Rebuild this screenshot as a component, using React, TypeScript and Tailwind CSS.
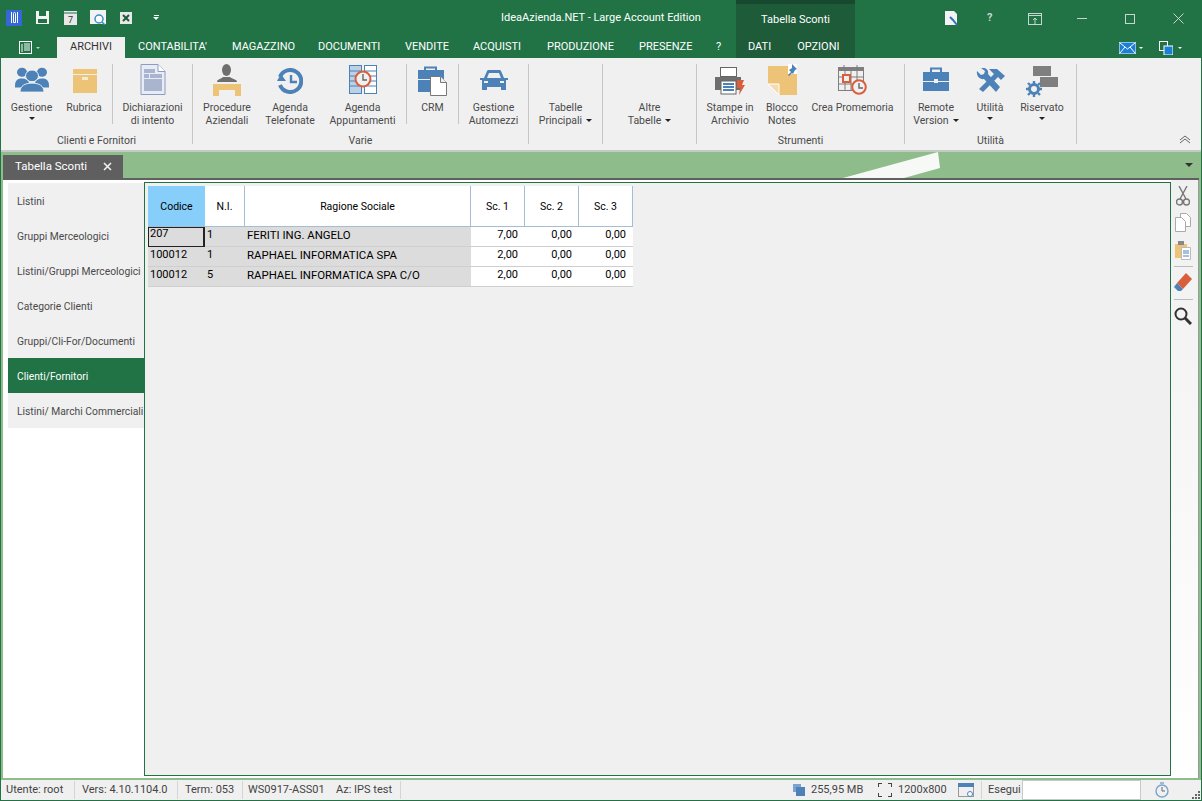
import type { ReactNode } from "react";

const blue = "#4d82b8";
const sand = "#edc377";
const grey = "#7f7f7f";
const red = "#d95f3b";

const GestioneIcon = () => (
  <svg width="34" height="27" viewBox="0 0 34 30" preserveAspectRatio="none">
    <circle cx="7" cy="7" r="5" fill={blue} />
    <circle cx="27" cy="7" r="5" fill={blue} />
    <path d="M0 22c0-6 3-8 7-8s6 2 7 4l-2 6H0z" fill={blue} />
    <path d="M34 22c0-6-3-8-7-8s-6 2-7 4l2 6h12z" fill={blue} />
    <circle cx="17" cy="11" r="6.5" fill={blue} stroke="#f0f0f0" />
    <path d="M5 29c0-7 5-10 12-10s12 3 12 10z" fill={blue} stroke="#f0f0f0" />
  </svg>
);

const RubricaIcon = () => (
  <svg width="24" height="24" viewBox="0 0 24 24">
    <rect width="24" height="5" fill={sand} />
    <rect y="6" width="24" height="18" fill={sand} />
    <rect x="9" y="8" width="6" height="3" fill="#f7e9cd" />
  </svg>
);

const DichiarazioniIcon = () => (
  <svg width="26" height="31" viewBox="0 0 26 31">
    <path d="M1 .5h17l7 7v23H1z" fill="#e8ecf5" stroke="#8f9cc2" />
    <path d="M18 .5v7h7" fill="#fff" stroke="#8f9cc2" />
    <rect x="4" y="5" width="11" height="4" fill="#a9b4cf" />
    <rect x="4" y="10" width="5" height="4" fill="#a9b4cf" />
    <rect x="10" y="10" width="12" height="4" fill="#a9b4cf" />
    <rect x="4" y="15" width="18" height="12" fill="#a9b4cf" />
  </svg>
);

const ProcedureIcon = () => (
  <svg width="28" height="32" viewBox="0 0 28 32">
    <ellipse cx="13.5" cy="6" rx="4.5" ry="6" fill="#6e6e6e" />
    <path d="M4 18c0-3 4-3 6-5h7c2 2 7 2 7 5z" fill="#6e6e6e" />
    <path d="M0 20h28v12h-6v-6H6v6H0z" fill={sand} />
  </svg>
);

const AgendaTelIcon = () => (
  <svg width="26" height="26" viewBox="0 0 26 26">
    <path d="M3 9a11 11 0 1 1 0 8" fill="none" stroke={blue} strokeWidth="4" />
    <path d="M0 13l4-7 5 7z" fill={blue} />
    <path d="M14 7v7h6" fill="none" stroke={blue} strokeWidth="2.4" />
  </svg>
);

const AgendaAppIcon = () => (
  <svg width="28" height="29" viewBox="0 0 28 29">
    <rect x=".5" y=".5" width="12" height="28" fill="#bcd0e6" stroke={blue} />
    <rect x="15.5" y=".5" width="12" height="28" fill="#fff" stroke={blue} />
    <path d="M1 6h11M1 11h11M1 16h11M1 21h11M16 6h11M16 11h11M16 16h11M16 21h11" stroke={blue} />
    <circle cx="14" cy="14" r="7.5" fill="#f0f0f0" stroke={red} strokeWidth="2" />
    <path d="M14 9v6h4" fill="none" stroke="#666" strokeWidth="1.4" />
  </svg>
);

const CrmIcon = () => (
  <svg width="29" height="30" viewBox="0 0 29 30">
    <path d="M7 5V1.5h11V5" fill="none" stroke={blue} strokeWidth="2" />
    <rect y="4" width="26" height="9" fill={blue} />
    <rect y="14" width="26" height="12" fill={blue} />
    <path d="M12.5 10.5h10l6 6v13h-16z" fill="#fff" stroke="#777" />
    <path d="M22.5 10.5v6h6" fill="#eee" stroke="#777" />
  </svg>
);

const CarIcon = () => (
  <svg width="28" height="20" viewBox="0 0 28 20">
    <path d="M4 8l3-7a2 2 0 0 1 1-1h12a2 2 0 0 1 1 1l3 7h4v2h-2v10h-5v-3H7v3H2V10H0V8zM7 8h14l-2-5H9z" fill={blue} fillRule="evenodd" />
    <rect x="4" y="11" width="4" height="2" fill="#f0f0f0" />
    <rect x="20" y="11" width="4" height="2" fill="#f0f0f0" />
  </svg>
);

const PrinterIcon = () => (
  <svg width="30" height="28" viewBox="0 0 30 28">
    <rect x="5.5" y=".5" width="16" height="9" fill="#fff" stroke="#666" />
    <path d="M0 10h26v13H0z" fill="#6e6e6e" />
    <rect x="6" y="14" width="15" height="13" fill="#fff" stroke="#666" />
    <path d="M8 17h11M8 20h11M8 23h11" stroke={blue} strokeWidth="2" />
    <path d="M22 13h7l-2 5h3l-6 10 1-7h-3z" fill={red} />
  </svg>
);

const NotesIcon = () => (
  <svg width="29" height="31" viewBox="0 0 29 31">
    <path d="M0 2h29v29H11L0 20z" fill={sand} />
    <path d="M0 20h11v11z" fill="#f4dcae" stroke="#fff" />
    <rect x="20" width="9" height="10" fill="#fff" />
    <path d="M24 0l5 5-2 1-2 4-1-1-3 3-1-1 3-3-2-2 3-2z" fill={blue} />
  </svg>
);

const PromemoriaIcon = () => (
  <svg width="30" height="30" viewBox="0 0 30 30">
    <rect x=".5" y="2.5" width="25" height="23" fill="none" stroke={grey} />
    <rect y="2" width="26" height="4" fill={grey} />
    <path d="M6 0v5M19 0v5M7 6v20M13 6v20M19 6v20M1 12h25M1 19h25" stroke={grey} />
    <rect x="5" y="10" width="7" height="7" fill="#f0f0f0" stroke={red} strokeWidth="2" />
    <circle cx="21" cy="22" r="6.8" fill="#f0f0f0" stroke={red} strokeWidth="2" />
    <path d="M21 18v5h4" fill="none" stroke="#666" strokeWidth="1.4" />
  </svg>
);

const BriefcaseIcon = () => (
  <svg width="26" height="24" viewBox="0 0 26 24">
    <path d="M8 5V1.5h10V5" fill="none" stroke={blue} strokeWidth="2" />
    <rect y="5" width="26" height="9" fill={blue} />
    <rect y="15" width="26" height="9" fill={blue} />
    <rect x="11" y="12" width="4" height="4" fill="#f0f0f0" />
  </svg>
);

const ToolsIcon = () => (
  <svg width="29" height="25" viewBox="0 0 29 25">
    <path d="M1 3l4 4 3-1 1-3-4-3c5-1 8 2 7 6l12 13-4 5L8 11C4 12 0 8 1 3z" fill={blue} />
    <path d="M13 1h8l8 7-4 4-3-3L7 24l-4-3L18 6z" fill={blue} />
  </svg>
);

const RiservatoIcon = () => (
  <svg width="32" height="31" viewBox="0 0 32 31">
    <rect x="7" width="18" height="10" fill={grey} />
    <rect x="14" y="11" width="18" height="10" fill={grey} />
    <circle cx="8" cy="23" r="4.5" fill="none" stroke={blue} strokeWidth="3" />
    <path d="M8 15v3M8 28v3M0 23h3M13 23h3M2 17l2 2M12 27l2 2M2 29l2-2M12 19l2-2" stroke={blue} strokeWidth="2.4" />
  </svg>
);

const Arrow = () => <span className="inline-block w-0 h-0 border-x-[3px] border-x-transparent border-t-[3px] border-t-[#222]" />;

type ItemProps = { w: string; top?: string; icon: ReactNode; lines: string[]; arrow?: "below" | "inline" };

const Item = ({ w, top, icon, lines, arrow }: ItemProps) => (
  <div className={`${w} flex flex-col items-center shrink-0`}>
    <div className={`h-[37px] flex items-start justify-center ${top ?? ""}`}>{icon}</div>
    {lines.map((l, i) => (
      <div key={i} className="h-[13px] leading-[13px] whitespace-nowrap flex items-center gap-1">
        {l}
        {arrow === "inline" && i === lines.length - 1 && <Arrow />}
      </div>
    ))}
    {arrow === "below" && (
      <div className="h-[9px] flex items-center">
        <Arrow />
      </div>
    )}
  </div>
);

const ShortSep = () => <div className="w-px h-[60px] bg-[#c6c6c6] shrink-0" />;

const Group = ({ w, label, children }: { w: string; label?: string; children: ReactNode }) => (
  <div className={`${w} shrink-0 h-[80px] mt-[6px] border-r border-[#c6c6c6] flex flex-col`}>
    <div className="h-[70px] shrink-0 flex">{children}</div>
    <div className="text-center leading-[14px] shrink-0">{label}</div>
  </div>
);

const tabs = [
  ["ARCHIVI", "w-[68px] bg-[#f0f0f0] text-[#333]"],
  ["CONTABILITA'", "w-[94px]"],
  ["MAGAZZINO", "w-[86px]"],
  ["DOCUMENTI", "w-[87px]"],
  ["VENDITE", "w-[68px]"],
  ["ACQUISTI", "w-[74px]"],
  ["PRODUZIONE", "w-[92px]"],
  ["PRESENZE", "w-[77px]"],
  ["?", "w-[20px]"],
];

const sideItems = [
  "Listini",
  "Gruppi Merceologici",
  "Listini/Gruppi Merceologici",
  "Categorie Clienti",
  "Gruppi/Cli-For/Documenti",
  "Clienti/Fornitori",
  "Listini/ Marchi Commerciali",
];

const rows = [
  ["207", "1", "FERITI ING. ANGELO", "7,00"],
  ["100012", "1", "RAPHAEL INFORMATICA SPA", "2,00"],
  ["100012", "5", "RAPHAEL INFORMATICA SPA C/O", "2,00"],
];

const Head = ({ w, children, cls }: { w: string; children: ReactNode; cls?: string }) => (
  <div className={`${w} h-full pt-[2px] flex items-center justify-center border-r border-b border-[#a3bdd6] ${cls ?? "bg-white"}`}>{children}</div>
);

const Sep = () => <div className="w-px h-[18px] bg-[#d5d5d5] shrink-0" />;

export default function App() {
  return (
    <div className="w-[1202px] h-[801px] overflow-hidden flex flex-col bg-[#217346] text-[11px] text-[#444] font-['Roboto',sans-serif]">
      {/* title bar + ribbon tabs */}
      <div className="h-[58px] flex text-white shrink-0">
        <div className="w-[736px] flex flex-col">
          <div className="h-[37px] flex items-center">
            <div className="flex items-center pb-[2px]">
              <div className="w-[16px] h-[16px] ml-[6px] bg-[#3467d8] flex items-center justify-center gap-[1px]">
                <span className="w-px h-[11px] bg-white" />
                <span className="w-[3px] h-[11px] border border-white rounded-t-sm" />
                <span className="w-px h-[11px] bg-white" />
              </div>
              <svg className="ml-[14px]" width="13" height="13" viewBox="0 0 13 13">
                <path d="M0 0h13v13H0z" fill="#f3f3f3" />
                <rect x="3" y="0" width="7" height="5" fill="#217346" />
                <rect x="2" y="8" width="9" height="4" fill="#217346" />
              </svg>
              <svg className="ml-[15px]" width="13" height="14" viewBox="0 0 13 14">
                <path d="M0 0h13v14H0z" fill="#e8e8e8" />
                <path d="M0 2h13" stroke="#217346" />
                <text x="4" y="12" fontSize="9" fill="#333">7</text>
              </svg>
              <svg className="ml-[13px]" width="17" height="15" viewBox="0 0 17 15">
                <path d="M0 0h16v14H0z" fill="#f3f3f3" />
                <circle cx="9" cy="9" r="4" fill="#fff" stroke="#3b8fc4" strokeWidth="1.5" />
                <path d="M12 12l3 3" stroke="#3b8fc4" strokeWidth="1.5" />
              </svg>
              <svg className="ml-[13px]" width="12" height="12" viewBox="0 0 12 12">
                <rect width="12" height="12" fill="#e8e8e8" />
                <path d="M3 3l6 6M9 3l-6 6" stroke="#1c5c38" strokeWidth="2" />
              </svg>
              <div className="ml-[21px] flex flex-col items-center gap-[1px]">
                <span className="w-[5px] h-px bg-white" />
                <span className="w-0 h-0 border-x-[3px] border-x-transparent border-t-[3px] border-t-white" />
              </div>
            </div>
            <span className="ml-[342px] whitespace-nowrap">IdeaAzienda.NET - Large Account Edition</span>
          </div>
          <div className="h-[21px] flex items-center">
            <div className="w-[57px] pl-[19px] flex items-center gap-1">
              <svg width="13" height="13" viewBox="0 0 13 13">
                <rect x=".5" y=".5" width="12" height="12" fill="none" stroke="#fff" />
                <path d="M3 3v8M5 3h6M5 5h6M5 7h6M5 9h6" stroke="#fff" />
              </svg>
              <span className="w-0 h-0 border-x-[2px] border-x-transparent border-t-[2px] border-t-[#ccc]" />
            </div>
            {tabs.map(([t, c]) => (
              <div key={t} className={`${c} pl-[13px] h-full flex items-center whitespace-nowrap`}>
                {t}
              </div>
            ))}
          </div>
        </div>

        <div className="w-[119px] bg-[#1d5b39] border-t-[4px] border-[#17492e] flex flex-col">
          <div className="h-[33px] flex items-center justify-center">Tabella Sconti</div>
          <div className="h-[21px] flex items-center pl-[12px] gap-[26px]">
            <span>DATI</span>
            <span>OPZIONI</span>
          </div>
        </div>

        <div className="flex-1 flex flex-col">
          <div className="h-[37px] flex items-center pl-[90px]">
            <svg width="14" height="15" viewBox="0 0 14 15">
              <path d="M0 0h9l3 3v11H0z" fill="#f3f3f3" />
              <path d="M5 6l3 3 4 5" stroke="#2f6fc0" strokeWidth="2" fill="none" />
            </svg>
            <span className="ml-[28px] w-[8px] font-bold text-[#c9d6cf]">?</span>
            <svg className="ml-[33px]" width="14" height="12" viewBox="0 0 14 12">
              <rect x=".5" y=".5" width="13" height="11" fill="none" stroke="#c9d6cf" />
              <path d="M1 2.5h12M7 11V5M5 7l2-2 2 2" stroke="#c9d6cf" fill="none" />
            </svg>
            <span className="ml-[35px] w-[10px] h-px bg-[#c9d6cf]" />
            <span className="ml-[38px] w-[10px] h-[10px] border border-[#c9d6cf]" />
            <svg className="ml-[38px]" width="11" height="11" viewBox="0 0 11 11">
              <path d="M.5.5l10 10M10.5.5l-10 10" stroke="#c9d6cf" />
            </svg>
          </div>
          <div className="h-[21px] flex items-center pl-[264px]">
            <svg width="17" height="12" viewBox="0 0 17 12">
              <rect width="17" height="12" fill="#1b7fd4" stroke="#fff" />
              <path d="M1 1l7.5 6L16 1M1 11l5-6M16 11l-5-6" stroke="#fff" fill="none" />
            </svg>
            <span className="ml-[3px] w-0 h-0 border-x-[2px] border-x-transparent border-t-[2px] border-t-white" />
            <svg className="ml-[16px]" width="14" height="14" viewBox="0 0 14 14">
              <rect x=".5" y=".5" width="8" height="9" fill="#217346" stroke="#fff" />
              <rect x="5" y="5" width="9" height="9" fill="#1b7fd4" stroke="#fff" />
            </svg>
            <span className="ml-[5px] w-0 h-0 border-x-[2px] border-x-transparent border-t-[2px] border-t-white" />
          </div>
        </div>
      </div>

      {/* ribbon */}
      <div className="h-[94px] ml-px mr-px bg-[#f0f0f0] border-b-2 border-[#c3c9c3] flex shrink-0 text-[10.5px] text-[#4a4a4a]">
        <Group w="w-[192px]" label="Clienti e Fornitori">
          <Item w="w-[61px]" top="pt-[2px]" icon={<GestioneIcon />} lines={["Gestione"]} arrow="below" />
          <Item w="w-[44px]" top="pt-[5px] pl-[2px]" icon={<RubricaIcon />} lines={["Rubrica"]} />
          <div className="w-[6px]" />
          <ShortSep />
          <Item w="w-[79px]" icon={<DichiarazioniIcon />} lines={["Dichiarazioni", "di intento"]} />
        </Group>
        <Group w="w-[336px]" label="Varie">
          <Item w="w-[68px]" icon={<ProcedureIcon />} lines={["Procedure", "Aziendali"]} />
          <Item w="w-[58px]" top="pt-[4px]" icon={<AgendaTelIcon />} lines={["Agenda", "Telefonate"]} />
          <Item w="w-[87px]" top="pt-[1px]" icon={<AgendaAppIcon />} lines={["Agenda", "Appuntamenti"]} />
          <ShortSep />
          <Item w="w-[51px]" top="pt-[2px]" icon={<CrmIcon />} lines={["CRM"]} />
          <ShortSep />
          <Item w="w-[69px]" top="pt-[6px]" icon={<CarIcon />} lines={["Gestione", "Automezzi"]} />
        </Group>
        <Group w="w-[74px]">
          <Item w="w-[73px]" icon={null} lines={["Tabelle", "Principali"]} arrow="inline" />
        </Group>
        <Group w="w-[94px]">
          <Item w="w-[93px]" icon={null} lines={["Altre", "Tabelle"]} arrow="inline" />
        </Group>
        <Group w="w-[208px]" label="Strumenti">
          <Item w="w-[66px]" top="pt-[3px]" icon={<PrinterIcon />} lines={["Stampe in", "Archivio"]} />
          <Item w="w-[38px]" icon={<NotesIcon />} lines={["Blocco", "Notes"]} />
          <Item w="w-[103px]" top="pt-[1px]" icon={<PromemoriaIcon />} lines={["Crea Promemoria"]} />
        </Group>
        <Group w="w-[172px]" label="Utilità">
          <Item w="w-[62px]" top="pt-[3px]" icon={<BriefcaseIcon />} lines={["Remote", "Version"]} arrow="inline" />
          <Item w="w-[46px]" top="pt-[4px]" icon={<ToolsIcon />} lines={["Utilità"]} arrow="below" />
          <Item w="w-[58px]" top="pt-[2px]" icon={<RiservatoIcon />} lines={["Riservato"]} arrow="below" />
        </Group>
        <div className="flex-1 flex justify-end items-end pr-[10px] pb-[6px]">
          <svg width="12" height="9" viewBox="0 0 12 9">
            <path d="M1 5l5-4 5 4M1 8l5-4 5 4" fill="none" stroke="#666" />
          </svg>
        </div>
      </div>

      {/* document tab strip */}
      <div className="h-[26px] ml-px mr-px bg-[#8fbc8b] relative flex items-end pl-[2px] shrink-0">
        <div className="w-[120px] h-[23px] bg-[#5f5f5f] text-white text-[11.5px] flex items-center pl-[12px]">
          Tabella Sconti
          <svg className="ml-[16px]" width="9" height="9" viewBox="0 0 9 9">
            <path d="M1 1l7 7M8 1l-7 7" stroke="#f0f0f0" strokeWidth="1.6" />
          </svg>
        </div>
        <svg className="absolute left-[842px] top-0" width="100" height="26" viewBox="0 0 100 26">
          <path d="M0 26L95 0l2 16-36 10z" fill="#f7f9f6" />
        </svg>
        <span className="absolute right-[8px] top-[11px] w-0 h-0 border-x-[4px] border-x-transparent border-t-[4px] border-t-[#333]" />
      </div>

      {/* workspace */}
      <div className="flex-1 min-h-0 ml-px mr-px bg-[#8fbc8b] pl-[2px] pr-[2px] pb-[2px] flex flex-col">
        <div className="h-[2px] bg-[#606060]" />
        <div className="flex-1 min-h-0 flex bg-white border-r border-[#9a9a9a] text-[#4a4a4a]">
          <div className="w-[141px] pl-[5px] pt-[3px] shrink-0 flex flex-col text-[10.3px]">
            {sideItems.map((s) => (
              <div
                key={s}
                className={`h-[35px] flex items-center pl-[9px] pt-[3px] whitespace-nowrap ${
                  s === "Clienti/Fornitori" ? "bg-[#217346] text-white" : "bg-[#f0f0f0]"
                }`}
              >
                {s}
              </div>
            ))}
          </div>

          <div className="w-[1027px] shrink-0 mt-[2px] mb-[2px] bg-[#f0f0f0] border border-[#217346] pl-[3px] pt-[3px] text-black">
            <div className="w-[485px] flex h-[41px] text-[10.5px]">
              <Head w="w-[57px]" cls="bg-[#87cefa] border-r-0">Codice</Head>
              <Head w="w-[40px]">N.I.</Head>
              <Head w="w-[226px]">Ragione Sociale</Head>
              <Head w="w-[54px]">Sc. 1</Head>
              <Head w="w-[54px]">Sc. 2</Head>
              <Head w="w-[54px]">Sc. 3</Head>
            </div>
            {rows.map((r, i) => (
              <div key={i} className="w-[485px] flex h-[20px]">
                <div className="w-[323px] flex bg-[#dcdcdc] border-b border-[#cfcfcf]">
                  <div className={`w-[57px] ${i === 0 ? "self-start h-[21px] leading-[12px] pl-px border-t border-l border-r-2 border-b-2 border-[#222]" : "leading-[14px] pl-[2px] pt-px"}`}>{r[0]}</div>
                  <div className="w-[40px] pl-[2px] leading-[14px] pt-px">{r[1]}</div>
                  <div className="pl-[2px] leading-[14px] pt-px whitespace-nowrap text-[11.4px]">{r[2]}</div>
                </div>
                {[r[3], "0,00", "0,00"].map((v, j) => (
                  <div key={j} className="w-[54px] bg-white border-b border-[#cfcfcf] text-right pr-[7px] leading-[14px] pt-px">
                    {v}
                  </div>
                ))}
              </div>
            ))}
          </div>

          <div className="flex-1 bg-linear-to-b from-[#f0f0f0] to-white flex flex-col items-center pt-[6px] pr-[3px]">
            <svg width="14" height="20" viewBox="0 0 14 20">
              <path d="M3 0l7 13M11 0L4 13" stroke="#777" strokeWidth="1.4" />
              <circle cx="3.5" cy="16" r="3" fill="none" stroke="#777" strokeWidth="1.4" />
              <circle cx="10.5" cy="16" r="3" fill="none" stroke="#777" strokeWidth="1.4" />
            </svg>
            <svg className="mt-[7px]" width="16" height="19" viewBox="0 0 16 19">
              <path d="M5.5.5h6l4 4v9h-10z" fill="#fff" stroke="#aaa" />
              <path d="M.5 4.5h6l4 4v10h-10z" fill="#fff" stroke="#aaa" />
            </svg>
            <svg className="mt-[9px]" width="16" height="19" viewBox="0 0 16 19">
              <path d="M0 3h12v14H0z" fill={sand} />
              <rect x="3" y="0" width="6" height="4" fill="#888" />
              <path d="M6.5 6.5h9v12h-9z" fill="#fff" stroke="#bbb" />
              <path d="M8 10h6M8 12h6M8 15h6" stroke={blue} />
            </svg>
            <div className="w-[19px] h-px bg-[#bbb] mt-[6px]" />
            <svg className="mt-[6px]" width="18" height="18" viewBox="0 0 18 18">
              <path d="M12 0l6 6-9 10-6-6z" fill={red} />
              <path d="M3 10l6 6-2 2H4l-4-4z" fill={blue} />
            </svg>
            <div className="w-[19px] h-px bg-[#bbb] mt-[8px]" />
            <svg className="mt-[7px]" width="18" height="18" viewBox="0 0 18 18">
              <circle cx="7" cy="7" r="5.5" fill="none" stroke="#333" strokeWidth="2" />
              <path d="M11 11l6 6" stroke="#333" strokeWidth="3" />
            </svg>
          </div>
        </div>
      </div>

      {/* status bar */}
      <div className="h-[20px] mb-px ml-px mr-px bg-[#f0f0f0] flex items-center text-[#444] shrink-0 whitespace-nowrap">
        <span className="pl-[5px] w-[73px] shrink-0">Utente: root</span>
        <Sep />
        <span className="pl-[7px] w-[102px] shrink-0">Vers: 4.10.1104.0</span>
        <Sep />
        <span className="pl-[7px] w-[64px] shrink-0">Term: 053</span>
        <Sep />
        <span className="pl-[5px] w-[93px] shrink-0">WS0917-ASS01</span>
        <span className="w-[64px] shrink-0">Az: IPS test</span>
        <Sep />
        <div className="w-[392px] shrink-0" />
        <svg width="12" height="12" viewBox="0 0 12 12">
          <rect width="8" height="8" fill="#7aa3d0" />
          <rect x="3" y="3" width="9" height="9" fill={blue} />
        </svg>
        <span className="ml-[6px] w-[67px] shrink-0">255,95 MB</span>
        <svg width="14" height="14" viewBox="0 0 14 14">
          <path d="M0 4V0h4M10 0h4v4M14 10v4h-4M4 14H0v-4" fill="none" stroke="#444" strokeWidth="2" />
        </svg>
        <span className="ml-[6px] w-[60px] shrink-0">1200x800</span>
        <svg width="16" height="15" viewBox="0 0 16 15">
          <rect x=".5" y=".5" width="15" height="13" fill="none" stroke="#999" />
          <rect width="16" height="4" fill={blue} />
          <circle cx="12" cy="11" r="2.5" fill="#fff" stroke={blue} />
        </svg>
        <div className="ml-[7px]"><Sep /></div>
        <span className="ml-[6px] w-[34px] shrink-0">Esegui</span>
        <div className="w-[119px] h-[20px] bg-white border border-[#c8c8c8] shrink-0" />
        <svg className="ml-[14px]" width="14" height="16" viewBox="0 0 14 16">
          <circle cx="7" cy="9" r="6" fill="none" stroke="#7aa3d0" strokeWidth="1.4" />
          <path d="M7 5v4h3" fill="none" stroke="#666" />
          <path d="M5 1h4" stroke="#7aa3d0" strokeWidth="1.4" />
        </svg>
        <svg className="ml-[23px] self-end mb-[1px]" width="8" height="8" viewBox="0 0 8 8">
          <path d="M6 0h2v2H6zM3 3h2v2H3zM6 3h2v2H6zM0 6h2v2H0zM3 6h2v2H3zM6 6h2v2H6z" fill="#666" />
        </svg>
      </div>
    </div>
  );
}
